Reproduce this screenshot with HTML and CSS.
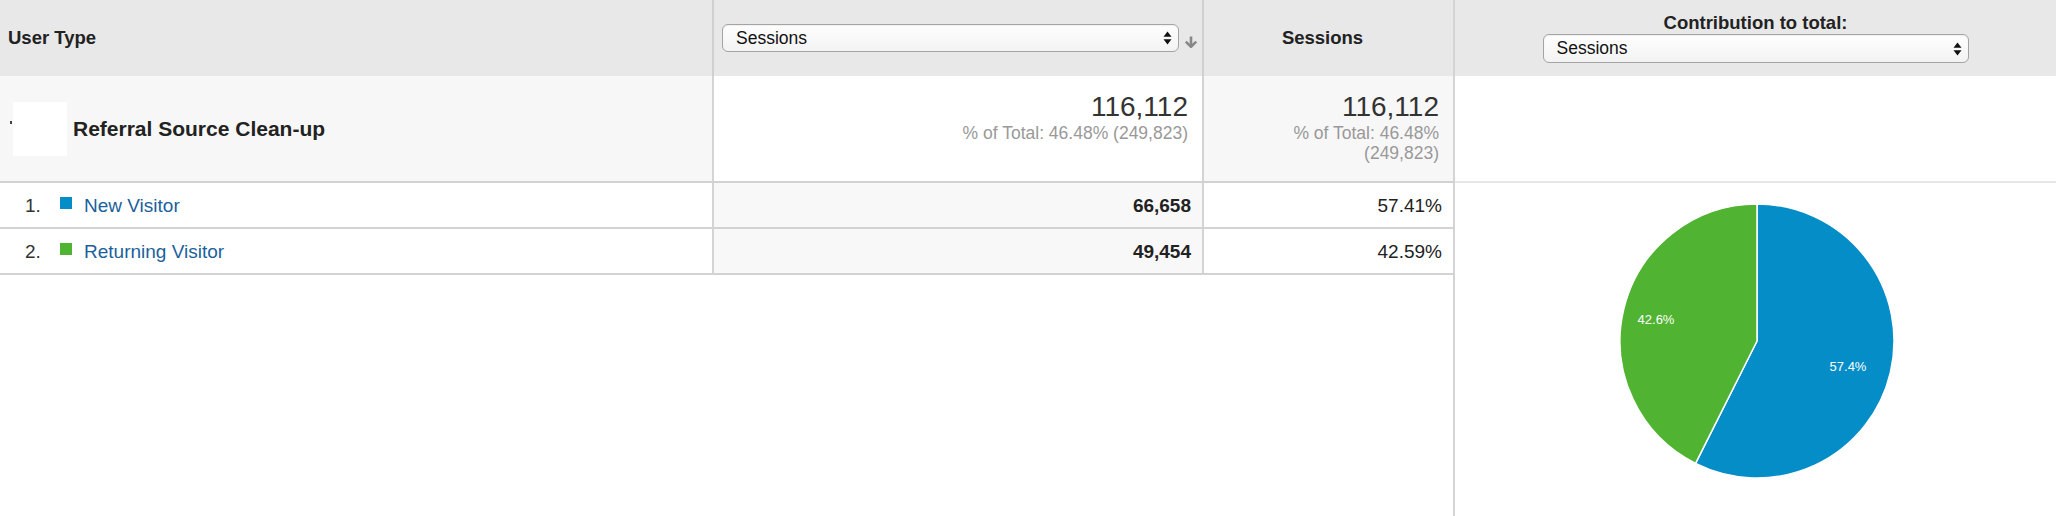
FILE: index.html
```html
<!DOCTYPE html>
<html lang="en">
<head>
<meta charset="utf-8">
<title>User Type – Sessions</title>
<link rel="stylesheet" href="styles.css">
</head>
<body>
<div class="report">
  <div class="table">
    <div class="row head">
      <div class="cell h-dim">User Type</div>
      <div class="cell h-metric">
        <div class="select select-metric">
          <span>Sessions</span>
          <svg class="updown" width="9" height="14" viewBox="0 0 9 14"><path d="M0.5 5.8 L4.5 0.5 L8.5 5.8 Z M0.5 8.2 L4.5 13.5 L8.5 8.2 Z" fill="#111"/></svg>
        </div>
        <svg class="sort" width="16" height="12" viewBox="0 0 16 12"><path d="M8 0.5 V10.5 M2.8 5.6 L8 10.8 L13.2 5.6" fill="none" stroke="#888" stroke-width="2.6"/></svg>
      </div>
      <div class="cell h-pct">Sessions</div>
    </div>

    <div class="row summary">
      <div class="cell s-dim">
        <span class="tick"></span>
        <span class="swatch-blank"></span>
        <span class="seg-name">Referral Source Clean-up</span>
      </div>
      <div class="cell s-metric">
        <div class="big">116,112</div>
        <div class="sub">% of Total: 46.48% (249,823)</div>
      </div>
      <div class="cell s-pct">
        <div class="big">116,112</div>
        <div class="sub">% of Total: 46.48% (249,823)</div>
      </div>
    </div>

    <div class="row data">
      <div class="cell d-dim">
        <span class="num">1.</span>
        <span class="sq sq-blue"></span>
        <a class="link" href="#">New Visitor</a>
      </div>
      <div class="cell d-metric">66,658</div>
      <div class="cell d-pct">57.41%</div>
    </div>

    <div class="row data">
      <div class="cell d-dim">
        <span class="num">2.</span>
        <span class="sq sq-green"></span>
        <a class="link" href="#">Returning Visitor</a>
      </div>
      <div class="cell d-metric">49,454</div>
      <div class="cell d-pct">42.59%</div>
    </div>
  </div>

  <div class="chart">
    <div class="chart-head">
      <div class="chart-title">Contribution to total:</div>
      <div class="select select-chart">
        <span>Sessions</span>
        <svg class="updown" width="9" height="14" viewBox="0 0 9 14"><path d="M0.5 5.8 L4.5 0.5 L8.5 5.8 Z M0.5 8.2 L4.5 13.5 L8.5 8.2 Z" fill="#111"/></svg>
      </div>
    </div>
    <div class="chart-summary"></div>
    <div class="chart-body">
      <svg class="pie" width="601" height="333" viewBox="0 0 601 333">
        <path d="M302 158 L302 21 A137 137 0 1 1 240.57 280.45 Z" fill="#058dc7" stroke="#fff" stroke-width="1.5" stroke-linejoin="round"/>
        <path d="M302 158 L240.57 280.45 A137 137 0 0 1 302 21 Z" fill="#50b432" stroke="#fff" stroke-width="1.5" stroke-linejoin="round"/>
        <text x="393" y="187.5" class="pie-label">57.4%</text>
        <text x="201" y="140.5" class="pie-label">42.6%</text>
      </svg>
    </div>
  </div>
</div>
</body>
</html>
```

FILE: styles.css
```css
* { box-sizing: border-box; }

html, body {
  margin: 0;
  padding: 0;
  background: #fff;
}

body {
  font-family: "Liberation Sans", Arial, Helvetica, sans-serif;
  color: #222;
}

.report {
  display: flex;
  width: 2056px;
  height: 516px;
  overflow: hidden;
}

/* ---------- table ---------- */
.table {
  width: 1453px;
  display: flex;
  flex-direction: column;
}

.row {
  display: grid;
  grid-template-columns: 714px 490px 249px;
}

.cell {
  display: flex;
  align-items: center;
  border-right: 2px solid #d4d4d4;
  min-width: 0;
}

.cell:last-child { border-right: 0; }

.head {
  height: 76px;
  background: #e8e8e8;
  font-weight: bold;
  font-size: 18.5px;
}

.head .cell { border-right-color: #d0d0d0; }

.h-dim { padding-left: 8px; }

.h-metric { padding-left: 8px; }

.h-pct {
  justify-content: center;
  padding-right: 12px;
}

.sort {
  margin-left: 4px;
  margin-top: 8px;
}

/* select look-alike */
.select {
  display: flex;
  align-items: center;
  justify-content: space-between;
  height: 28px;
  border: 1.5px solid #a4a4a4;
  border-radius: 6px;
  background: linear-gradient(#fefefe, #f3f3f3);
  box-shadow: inset 0 1px 1px rgba(0,0,0,0.06);
  padding: 0 6px 0 13px;
  font-size: 17.5px;
  font-weight: normal;
  color: #111;
}

.select-metric { width: 457px; }

.select-chart {
  width: 426px;
  height: 29px;
}

/* summary row */
.summary {
  height: 107px;
  border-bottom: 2px solid #d2d2d2;
}

.s-dim {
  background: #f7f7f7;
  padding-left: 10px;
}

.tick {
  width: 2px;
  height: 3px;
  background: #444;
  margin-bottom: 12px;
}

.swatch-blank {
  width: 54px;
  height: 54px;
  background: #fff;
  margin-left: 1px;
}

.seg-name {
  margin-left: 6px;
  font-size: 21px;
  font-weight: bold;
  color: #222;
}

.s-metric,
.s-pct {
  display: block;
  text-align: right;
  padding: 15px 14px 0 15px;
}

.s-metric { background: #fff; }
.s-pct { background: #f7f7f7; }

.big {
  font-size: 28px;
  line-height: 32px;
  color: #333;
}

.sub {
  font-size: 17.5px;
  line-height: 20px;
  color: #999;
}

/* data rows */
.data {
  height: 46px;
  border-bottom: 2px solid #d2d2d2;
  font-size: 19px;
}

.data .cell { padding-top: 2px; }

.d-dim {
  background: #fff;
  padding-left: 25px;
}

.num {
  width: 35px;
  color: #333;
}

.sq {
  width: 12px;
  height: 12px;
  margin-right: 12px;
  margin-bottom: 7px;
}

.sq-blue { background: #058dc7; }
.sq-green { background: #50b432; }

.link {
  color: #1b5f9c;
  text-decoration: none;
}

.d-metric {
  background: #f8f8f8;
  justify-content: flex-end;
  padding-right: 11px;
  font-weight: bold;
}

.d-pct {
  background: #fff;
  justify-content: flex-end;
  padding-right: 11px;
}

/* ---------- chart ---------- */
.chart {
  flex: 1;
  border-left: 2px solid #d4d4d4;
  display: flex;
  flex-direction: column;
}

.chart-head {
  height: 76px;
  background: #e8e8e8;
  display: flex;
  flex-direction: column;
  align-items: center;
  padding-top: 12px;
}

.chart-title {
  font-size: 18.5px;
  line-height: 21px;
  font-weight: bold;
  margin-bottom: 1px;
}

.chart-summary {
  height: 107px;
  border-bottom: 2px solid #e6e6e6;
  background: #fff;
}

.chart-body {
  flex: 1;
  background: #fff;
}

.pie { display: block; }

.pie-label {
  font-family: "Liberation Sans", Arial, sans-serif;
  font-size: 13px;
  fill: #fff;
  text-anchor: middle;
}
```
